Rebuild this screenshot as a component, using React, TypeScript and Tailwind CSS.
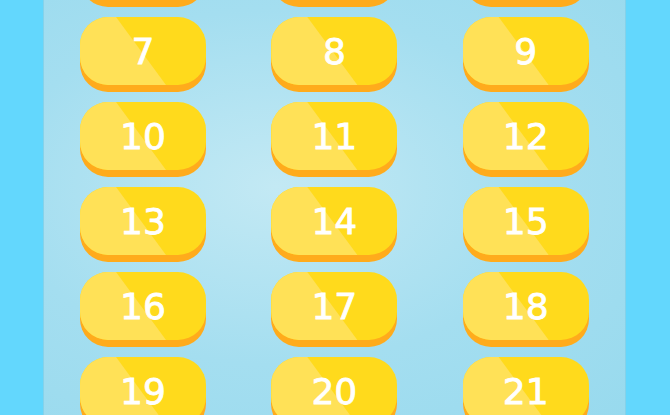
import React from 'react';

const levels = Array.from({ length: 21 }, (_, i) => i + 1);

function LevelButton({ n }: { n: number }) {
  return (
    <div className="relative h-[75px] w-[126px] cursor-pointer">
      {/* orange base peeking out under the face */}
      <div className="absolute inset-x-0 bottom-0 h-[68px] rounded-[28px] bg-[#ffab1c]" />
      <div className="relative h-[68px] w-full overflow-hidden rounded-[28px] bg-[#ffda1c]">
        {/* lighter diagonal sheen on the left side */}
        <div className="absolute inset-0 bg-[#ffe157] [clip-path:polygon(0_0,36px_0,86px_100%,0_100%)]" />
        <span className="relative flex h-full items-center justify-center pt-[2px] font-['DejaVu_Sans',sans-serif] text-[36px] leading-none text-white [-webkit-text-stroke:0.8px_white]">
          {n}
        </span>
      </div>
    </div>
  );
}

export default function App() {
  return (
    <div className="flex h-[415px] w-[670px] justify-center overflow-hidden bg-[#63d7fd]">
      <div className="ml-[-1px] h-full w-[583px] border-x border-[#84d2ea] bg-[radial-gradient(ellipse_at_40%_45%,#c3e9f4_0%,#a4def0_55%,#98daee_100%)]">
        <div className="mt-[-153px] grid grid-cols-3 gap-x-[65px] gap-y-[10px] pl-[36px] pr-[36px]">
          {levels.map((n) => (
            <LevelButton key={n} n={n} />
          ))}
        </div>
      </div>
    </div>
  );
}
